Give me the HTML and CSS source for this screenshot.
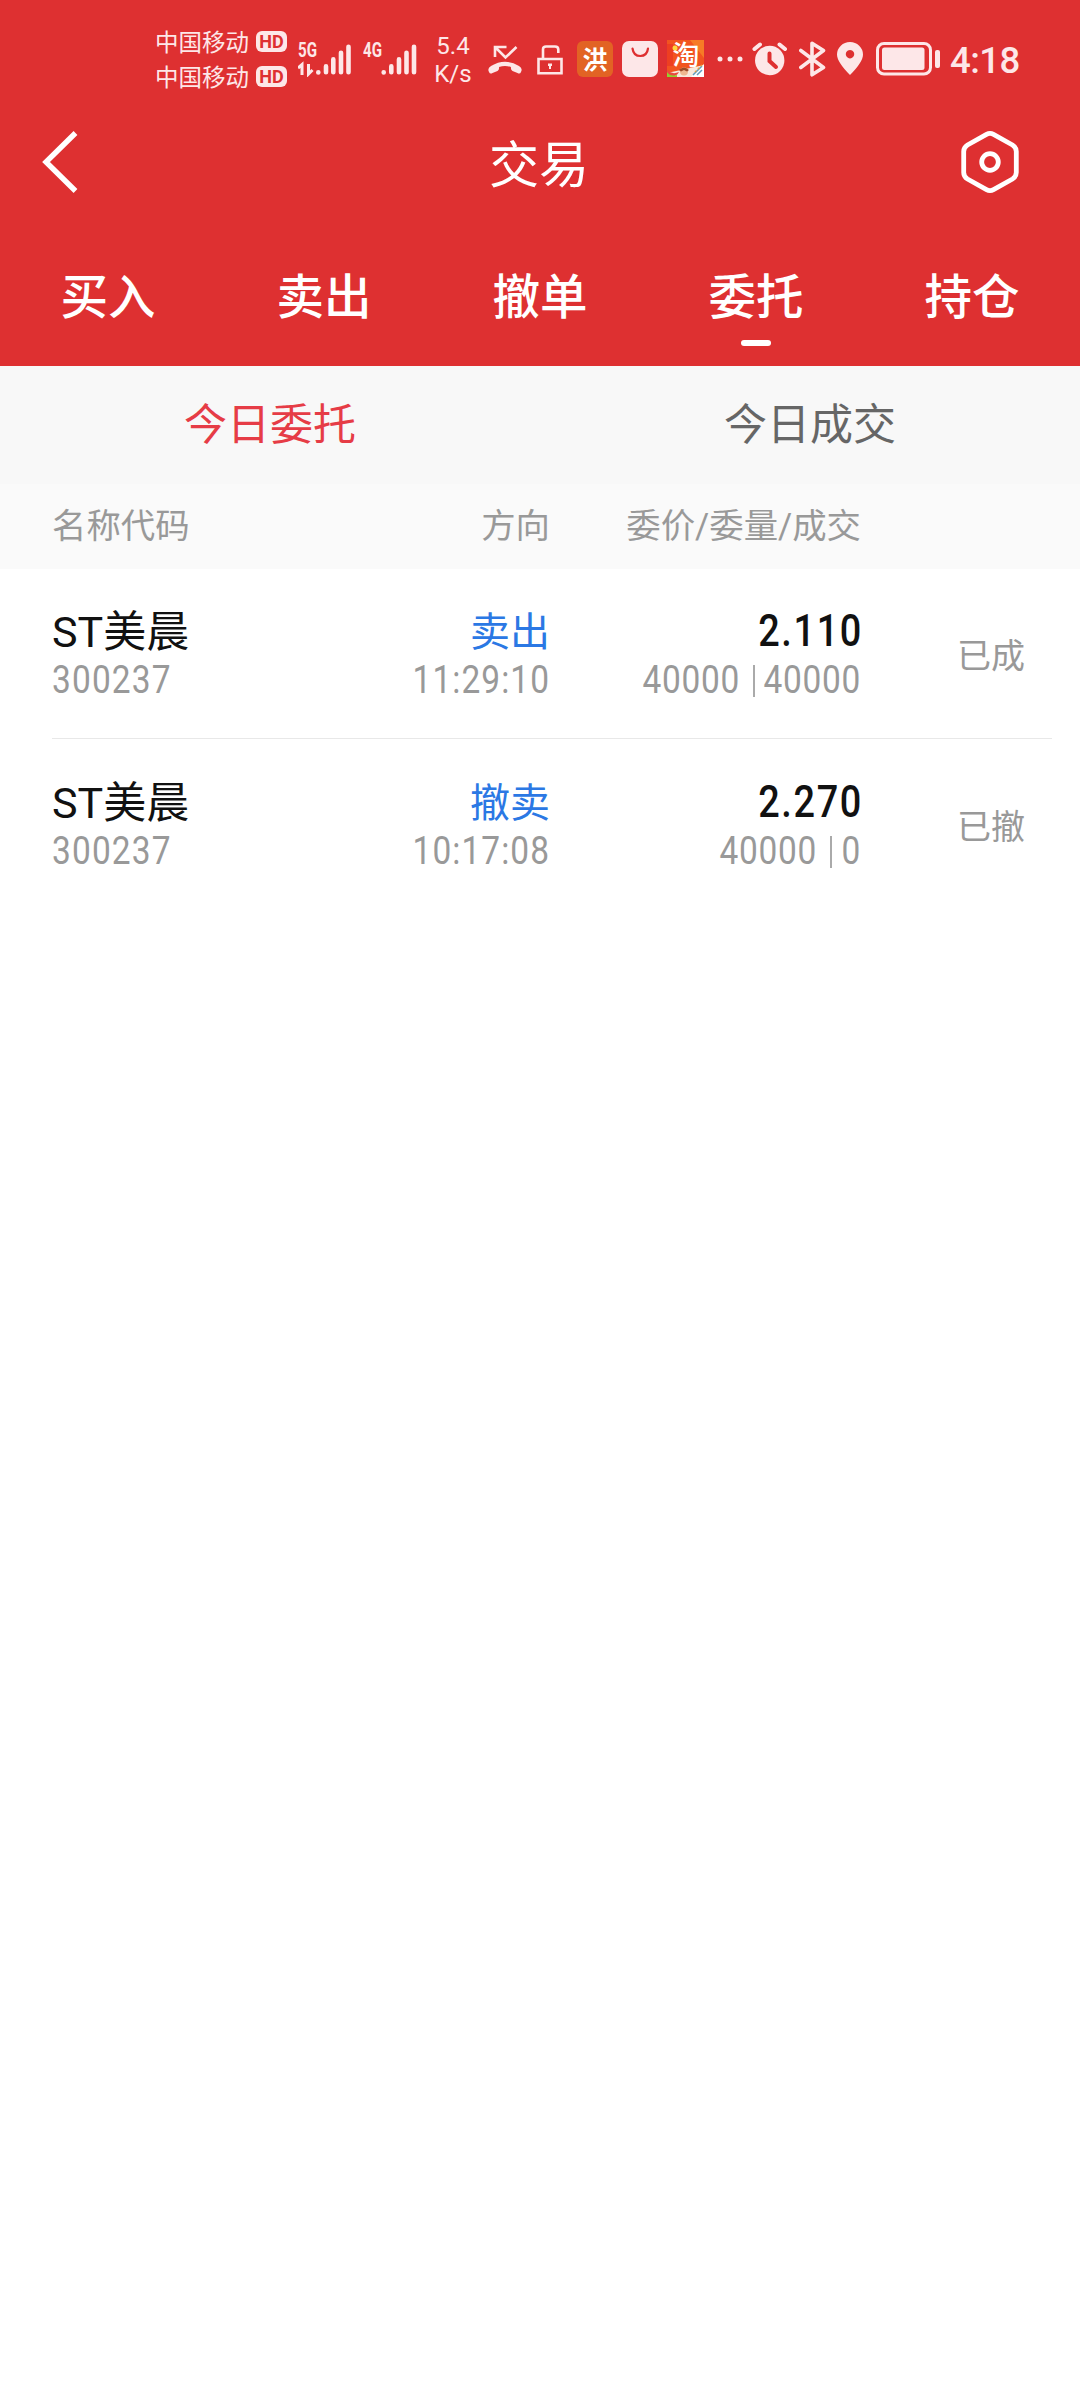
FILE: index.html
```html
<!DOCTYPE html>
<html lang="zh-CN">
<head>
<meta charset="utf-8">
<title>交易</title>
<link rel="stylesheet" href="styles.css">
</head>
<body>
<header class="header">
  <div class="status">
    <div class="carriers">
      <div class="carrier"><span>中国移动</span><span class="hd"><b>HD</b></span></div>
      <div class="carrier"><span>中国移动</span><span class="hd"><b>HD</b></span></div>
    </div>
    <svg class="ico signal5" width="54" height="36" viewBox="0 0 54 36">
      <text class="net" x="0" y="15.7" textLength="19" lengthAdjust="spacingAndGlyphs">5G</text>
      <path d="M0 27L4 23.500V34M10.500 23V33L14.500 29" fill="none" stroke="currentColor" stroke-width="3"/>
      <path d="M20.300 31.800v.2M28 26V31.800M35.300 19V31.800M43 12.300V31.800M50.500 6.300V31.800" transform="translate(0 -.6)" fill="none" stroke="currentColor" stroke-width="4.600" stroke-linecap="round"/>
    </svg>
    <svg class="ico signal4" width="54" height="36" viewBox="0 0 54 36">
      <text class="net" x="0" y="15.7" textLength="19" lengthAdjust="spacingAndGlyphs">4G</text>
      <path d="M20.700 31.800v.2M28.300 26V31.800M36 19V31.800M43.500 12.300V31.800M51 6.300V31.800" transform="translate(0 -.6)" fill="none" stroke="currentColor" stroke-width="4.600" stroke-linecap="round"/>
    </svg>
    <div class="speed"><span>5.4</span><span>K/s</span></div>
    <svg class="ico missed" width="34" height="30" viewBox="0 0 34 30">
      <path d="M28.500 2L17.500 12.500L7 2M7 12V2H18.500" fill="none" stroke="currentColor" stroke-width="2.600"/>
      <path d="M1 27Q-1 23.500 3 21Q17 12.500 31 21Q35 23.500 33 27Q32 29.500 29.500 28L24.500 26Q22.500 25 23 22Q17 20 11 22Q11.500 25 9.500 26L4.500 28Q2 29.500 1 27Z" fill="currentColor"/>
    </svg>
    <svg class="ico lock" width="26" height="30" viewBox="0 0 26 30">
      <path d="M1.500 14H24.500V28.300H1.500ZM6 14V4.500Q6 1.500 9 1.500H18Q21.300 1.500 21.300 4.500V8" fill="none" stroke="currentColor" stroke-width="2.600"/>
      <path d="M11 18.500h4v2.500h-1v3h-2v-3h-1Z" fill="currentColor"/>
    </svg>
    <div class="app app-hong">洪</div>
    <svg class="ico bag" width="36" height="36" viewBox="0 0 36 36">
      <rect width="36" height="36" rx="7" fill="currentColor"/>
      <path d="M10.500 7.500Q11.500 15 18.300 15T26 7.500" fill="none" stroke="#de3031" stroke-width="2.200" stroke-linecap="round"/>
    </svg>
    <svg class="ico taobao" width="37" height="37" viewBox="0 0 37 37">
      <rect width="37" height="37" fill="#f2541f"/>
      <path d="M23 0H37V18Z" fill="#f77b26"/>
      <path d="M0 4H6V26H0Z" fill="#ee3f21"/>
      <path d="M0 37V33L14 30L37 25V37Z" fill="#f8e9dc"/>
      <path d="M24 37L37 24V37Z" fill="#fff"/>
      <path d="M0 30Q5 35 12 32Q9 38 0 36Z" fill="#e9493f"/>
      <path d="M0 32Q3 37 10 35V37H0Z" fill="#8fd12f"/>
      <circle cx="17" cy="31.500" r="4" fill="#efb890"/>
      <path d="M12 30Q17 25 22 30L20 31.500L17 30L14 31.500Z" fill="#9b4b28"/>
      <path d="M26 35L35 26M30 35l5-5" stroke="#5f9cbf" stroke-width="1.500"/>
      <path d="M28 32L35 25" stroke="#e6a13c" stroke-width="1.300" stroke-dasharray="2 2"/>
      <text x="5.500" y="25" class="tao">淘</text>
      <circle cx="8" cy="8" r="2.500" fill="#ffd83d"/>
    </svg>
    <svg class="ico dots" width="26" height="6" viewBox="0 0 26 6" fill="currentColor"><circle cx="3" cy="3" r="2.500"/><circle cx="13" cy="3" r="2.500"/><circle cx="23" cy="3" r="2.500"/></svg>
    <svg class="ico alarm" width="36" height="34" viewBox="0 0 36 34">
      <circle cx="17.700" cy="18.500" r="14.700" fill="currentColor"/>
      <path d="M2.500 7L8 2.500M33 7L27.500 2.500" stroke="currentColor" stroke-width="4" stroke-linecap="round"/>
      <path d="M17.500 11.500V19L24 25" fill="none" stroke="#de3031" stroke-width="4" stroke-linecap="round"/>
    </svg>
    <svg class="ico bt" width="27" height="36" viewBox="0 0 27 36">
      <path d="M1.800 9.500L24.500 26.500L13 33.800V2.200L24.500 9.500L1.800 26.500" fill="none" stroke="currentColor" stroke-width="3.600" stroke-linejoin="round" stroke-linecap="round"/>
    </svg>
    <svg class="ico pin" width="26" height="33" viewBox="0 0 26 33">
      <path fill-rule="evenodd" d="M13 33Q0 20 0 12.500A13 12.500 0 0 1 26 12.500Q26 20 13 33ZM13 8a4.200 4.200 0 1 0 .01 0Z" fill="currentColor"/>
    </svg>
    <svg class="ico battery" width="64" height="34" viewBox="0 0 64 34">
      <rect x="1.500" y="1.500" width="53" height="30.500" rx="6.500" fill="none" stroke="currentColor" stroke-width="3"/>
      <rect x="6" y="5.500" width="42.500" height="22.500" rx="2.500" fill="currentColor"/>
      <rect x="59" y="8" width="5" height="18" rx="2" fill="currentColor"/>
    </svg>
    <span class="clock">4:18</span>
  </div>
  <div class="titlebar">
    <svg class="back" width="38" height="62" viewBox="0 0 38 62"><path d="M34.500 2L5 31L34.500 60" fill="none" stroke="#fff" stroke-width="5.400"/></svg>
    <h1 class="title">交易</h1>
    <svg class="gear" width="58" height="62" viewBox="0 0 58 62" fill="none" stroke="#fff" stroke-width="4.800"><path d="M25.500 3.400Q29 1.500 32.500 3.400L51.500 14Q55.300 16.300 55.300 20.500V41.500Q55.300 45.700 51.500 48L32.500 58.600Q29 60.500 25.500 58.600L6.500 48Q2.700 45.700 2.700 41.500V20.500Q2.700 16.300 6.500 14Z"/><circle cx="29" cy="31" r="8.300"/></svg>
  </div>
  <nav class="tabs">
    <a class="tab">买入</a><a class="tab">卖出</a><a class="tab">撤单</a><a class="tab active">委托</a><a class="tab">持仓</a>
  </nav>
</header>
<nav class="subtabs"><a class="subtab current">今日委托</a><a class="subtab">今日成交</a></nav>
<div class="columns grid"><span>名称代码</span><span class="right">方向</span><span class="right">委价/委量/成交</span><span></span></div>
<main>
  <section class="order grid">
    <div><div class="name">ST美晨</div><div class="num code">300237</div></div>
    <div class="right"><div class="side">卖出</div><div class="num">11:29:10</div></div>
    <div class="right"><div class="price">2.110</div><div class="qty"><span class="num">40000</span><i class="bar"></i><span class="num">40000</span></div></div>
    <div class="state">已成</div>
  </section>
  <section class="order grid">
    <div><div class="name">ST美晨</div><div class="num code">300237</div></div>
    <div class="right"><div class="side">撤卖</div><div class="num">10:17:08</div></div>
    <div class="right"><div class="price">2.270</div><div class="qty"><span class="num">40000</span><i class="bar"></i><span class="num one">0</span></div></div>
    <div class="state">已撤</div>
  </section>
</main>
</body>
</html>
```
FILE: styles.css
```css
* { box-sizing: border-box; }
body {
  margin: 0;
  min-height: 2400px;
  background: #fff;
  font-family: Roboto, "Noto Sans CJK SC", sans-serif;
  color: #111;
}
.header { height: 366px; background: #de3031; color: #fff; }

/* status bar */
.status { display: flex; align-items: flex-start; height: 110px; padding-left: 155px; color: #fde7e8; }
.status > * { flex: none; }
.carriers { width: 132px; padding-top: 24px; }
.carrier { display: flex; justify-content: space-between; align-items: center; height: 35px; font-size: 23.5px; line-height: 35px; white-space: nowrap; }
.carrier > span:first-child { padding-top: 3px; }
.hd { width: 31px; height: 21px; border-radius: 6px; background: #fde7e8; color: #de3031; text-align: center; line-height: 21px; font-size: 19px; }
.hd b { display: block; transform: scaleX(.95); }
.ico { display: block; }
.net { font: 700 20px Roboto, sans-serif; fill: currentColor; }
.signal5 { margin: 41px 0 0 11px; }
.signal4 { margin: 41px 0 0 11px; }
.speed { display: flex; flex-direction: column; align-items: center; width: 42px; margin: 32px 0 0 15px; font-size: 24px; line-height: 28px; }
.missed { margin: 45px 0 0 14px; }
.lock { margin: 45px 0 0 15px; }
.app { width: 36px; height: 36px; border-radius: 6px; text-align: center; }
.app-hong { margin: 41px 0 0 14px; background: #e26324; color: #fff; font: 700 25px/35px "Noto Sans CJK SC", sans-serif; }
.bag { margin: 41px 0 0 9px; }
.taobao { margin: 40px 0 0 9px; }
.tao { font: 500 27px "Noto Sans CJK SC", sans-serif; fill: #fff; }
.dots { margin: 56px 0 0 13px; }
.alarm { margin: 42px 0 0 9px; }
.bt { margin: 41px 0 0 11px; }
.pin { margin: 42px 0 0 11px; }
.battery { margin: 42px 0 0 13px; }
.clock { margin: 39px 0 0 10px; font-weight: 500; font-size: 36.5px; line-height: 44px; letter-spacing: -.5px; }

/* title and main tabs */
.titlebar { display: flex; align-items: center; justify-content: space-between; height: 104px; padding: 0 61px 0 41px; }
.title { margin: 8px 0 0 38px; font-size: 50px; line-height: 60px; font-weight: 400; }
.tabs { display: grid; grid-template-columns: repeat(5, 1fr); padding-top: 54px; }
.tab { display: flex; flex-direction: column; align-items: center; font-size: 47.5px; line-height: 60px; font-weight: 500; }
.active::after { content: ""; width: 30px; height: 6px; margin-top: 12px; border-radius: 3px; background: #fff; }

/* secondary tabs */
.subtabs { display: grid; grid-template-columns: 1fr 1fr; height: 118px; background: #f8f8f8; }
.subtab { text-align: center; font-size: 43px; line-height: 118px; height: 118px; color: #666; }
.current { color: #e63c46; }

/* order table */
.grid { display: grid; grid-template-columns: 250px 248px 311px 1fr; padding-left: 52px; }
.right { text-align: right; }
.columns { height: 85px; background: #fafafa; color: #999; font-size: 34.4px; line-height: 84px; white-space: nowrap; }
.order { height: 170px; margin: 0 28px 0 52px; padding-top: 32px; border-bottom: 1px solid #e8e8e8; }
.order.grid { padding-left: 0; }
.order + .order { height: 171px; padding-top: 33px; border-bottom: 0; }
.name { height: 57px; font-size: 43px; line-height: 62px; white-space: nowrap; }
.side { height: 57px; font-size: 40px; line-height: 63px; color: #2b78e4; }
.price { height: 57px; margin-right: -2px; font-size: 43.5px; line-height: 61px; font-weight: 500; letter-spacing: 1.900px; transform: scaleX(.87); transform-origin: right; }
.num { font-size: 38px; font-weight: 450; line-height: 44px; letter-spacing: 1.200px; color: #999; transform: scaleX(.88); transform-origin: right; }
.code { transform-origin: left; letter-spacing: 1.300px; }
.qty { display: flex; justify-content: flex-end; }
.qty .num { width: 94px; direction: rtl; letter-spacing: .8px; }
.qty .one { width: 17px; }
.bar { width: 2px; height: 32px; margin: 7px 12px 0 13px; background: #aaa; }
.state { padding-right: 27px; text-align: right; font-size: 34px; line-height: 110px; color: #999; }
```
